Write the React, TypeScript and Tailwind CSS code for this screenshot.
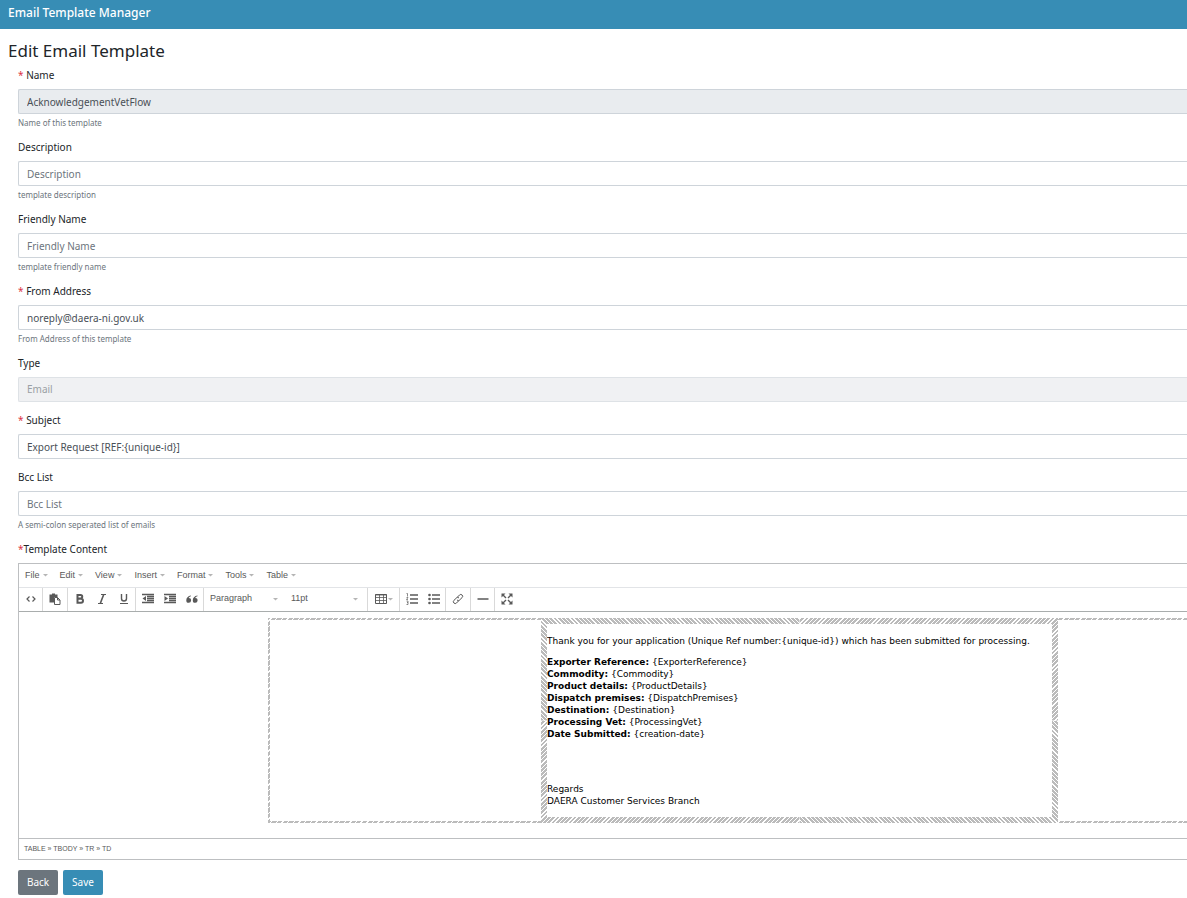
import type { ReactNode } from 'react'
import clsx from 'clsx'

interface FieldProps {
  id: string
  label: string
  required?: boolean
  value?: string
  placeholder?: string
  help?: string
  readOnly?: boolean
}

const labelClass = 'block text-[10px] leading-4 text-[#212529]'

function Field({ id, label, required, value, placeholder, help, readOnly }: FieldProps) {
  return (
    <div className={clsx(help ? 'h-[72px]' : 'h-[57px]')}>
      <label htmlFor={id} className={labelClass}>
        {required && <span className="text-[#dc3545]">* </span>}
        {label}
      </label>
      <input
        id={id}
        type="text"
        defaultValue={value}
        placeholder={placeholder}
        readOnly={readOnly}
        className={clsx(
          'mt-1.5 block h-[25px] w-full rounded-l-xs border border-r-0 border-[#ced4da] px-2 text-[10px] text-[#495057] outline-none placeholder:text-[#6c757d]',
          readOnly ? 'bg-[#e9ecef]' : 'bg-white'
        )}
      />
      {help && <small className="mt-[3px] block text-[8px] leading-3 text-[#6c757d]">{help}</small>}
    </div>
  )
}

function Caret() {
  return (
    <svg width="5" height="3" viewBox="0 0 5 3" className="shrink-0" aria-hidden="true">
      <path d="M0 0h5L2.5 2.5z" fill="#b5b5b5" />
    </svg>
  )
}

const menus = ['File', 'Edit', 'View', 'Insert', 'Format', 'Tools', 'Table']

function Icon({ children }: { children: ReactNode }) {
  return (
    <svg
      width="12"
      height="12"
      viewBox="0 0 12 12"
      fill="none"
      stroke="#595959"
      className="shrink-0"
      aria-hidden="true"
    >
      {children}
    </svg>
  )
}

function ToolButton({ label, children }: { label: string; children: ReactNode }) {
  return (
    <button type="button" aria-label={label} className="flex h-[22px] w-[22px] items-center justify-center">
      {children}
    </button>
  )
}

function ToolGroup({ children }: { children: ReactNode }) {
  return <div className="flex items-start border-r border-[#d9d9d9] px-px last:border-r-0">{children}</div>
}

function Toolbar() {
  return (
    <div className="flex h-6 border-b border-[#a9adad]">
      <div className="flex items-start border-r border-[#d9d9d9] pl-px">
        <ToolButton label="Source code">
          <Icon>
            <path d="M4.500 3.500 2 6l2.500 2.500M7.500 3.500 10 6 7.500 8.500" strokeWidth="1.200" />
          </Icon>
        </ToolButton>
      </div>
      <ToolGroup>
        <ToolButton label="Paste as text">
          <Icon>
            <path d="M.5 1.500h2.500V.5h3v1h2.500V4H5v5.500H.5z" fill="#595959" stroke="none" />
            <path d="M5.500 4.500h3l2.500 2.500v4.500h-5.500z" fill="#fff" />
            <path d="M8.500 4.500V7H11" />
          </Icon>
        </ToolButton>
      </ToolGroup>
      <div className="flex items-start border-r border-[#d9d9d9] pl-px">
        <ToolButton label="Bold">
          <Icon>
            <path d="M3.500 2h3a1.700 1.700 0 0 1 0 3.500h-3zM3.500 5.700H7a2 2 0 0 1 0 4H3.500z" strokeWidth="2" />
          </Icon>
        </ToolButton>
        <ToolButton label="Italic">
          <Icon>
            <path d="M5 1.500h5M2 10.500h5" />
            <path d="M7.700 1.500 4.300 10.500" strokeWidth="1.600" />
          </Icon>
        </ToolButton>
        <ToolButton label="Underline">
          <Icon>
            <path d="M3.500 1v4.500a2.500 2.500 0 0 0 5 0V1" strokeWidth="1.400" />
            <path d="M2 10.500h8" />
          </Icon>
        </ToolButton>
      </div>
      <div className="flex items-start border-r border-[#d9d9d9] pl-px">
        <ToolButton label="Decrease indent">
          <Icon>
            <path d="M0 1.500h12M5 3.500h7M5 5.500h7M5 7.500h7M0 9.500h12" strokeWidth="1.400" />
            <path d="M4 3v5L.5 5.500z" fill="#595959" stroke="none" />
          </Icon>
        </ToolButton>
        <ToolButton label="Increase indent">
          <Icon>
            <path d="M0 1.500h12M5 3.500h7M5 5.500h7M5 7.500h7M0 9.500h12" strokeWidth="1.400" />
            <path d="M.5 3v5L4 5.500z" fill="#595959" stroke="none" />
          </Icon>
        </ToolButton>
        <ToolButton label="Blockquote">
          <Icon>
            <g fill="#595959" stroke="none">
              <path d="M5 2.500C2 3 .3 4.800.3 7.200A2.400 2.400 0 1 0 2.700 5c.2-.8 1-1.500 2.300-1.800z" />
              <path d="M11.500 2.500c-3 .5-4.700 2.300-4.700 4.700A2.400 2.400 0 1 0 9.200 5c.2-.8 1-1.500 2.300-1.800z" />
            </g>
          </Icon>
        </ToolButton>
      </div>
      <ToolGroup>
        <button type="button" className="flex h-[22px] w-[81px] items-center justify-between pr-2 pl-[5px]">
          Paragraph
          <Caret />
        </button>
        <button type="button" className="flex h-[22px] w-20 items-center justify-between pr-2 pl-[5px]">
          11pt
          <Caret />
        </button>
      </ToolGroup>
      <div className="flex items-start border-r border-[#d9d9d9] pl-px">
        <button
          type="button"
          aria-label="Table"
          className="flex h-[22px] w-[30px] items-center justify-center gap-px"
        >
          <Icon>
            <path d="M.5 1.500h11v9H.5z" />
            <path d="M0 2h12M.5 4.500h11M.5 7.500h11M4.500 2v9M8.500 2v9" strokeWidth=".8" />
          </Icon>
          <Caret />
        </button>
      </div>
      <div className="flex items-start border-r border-[#d9d9d9] pl-px">
        <ToolButton label="Numbered list">
          <Icon>
            <path d="M4 2h8M4 6h8M4 10h8" strokeWidth="1.300" />
            <path d="M.5 .5h1v3M.5 4.500H2L.5 6.500H2M.5 8H2v3.500H.5M1 9.500h1" strokeWidth=".7" />
          </Icon>
        </ToolButton>
        <ToolButton label="Bullet list">
          <Icon>
            <path d="M4 2h8M4 6h8M4 10h8" strokeWidth="1.300" />
            <g fill="#595959" stroke="none">
              <circle cx="1.500" cy="2" r="1.300" />
              <circle cx="1.500" cy="6" r="1.300" />
              <circle cx="1.500" cy="10" r="1.300" />
            </g>
          </Icon>
        </ToolButton>
      </div>
      <ToolGroup>
        <ToolButton label="Insert link">
          <Icon>
            <path d="M5 4.500 7.500 2a1.800 1.800 0 0 1 2.600 2.600L7.600 7a1.800 1.800 0 0 1-2.600 0M7 7.500 4.500 10a1.800 1.800 0 0 1-2.600-2.600L4.400 5A1.800 1.800 0 0 1 7 5" />
          </Icon>
        </ToolButton>
      </ToolGroup>
      <div className="flex items-start border-r border-[#d9d9d9] pl-px">
        <ToolButton label="Horizontal line">
          <Icon>
            <path d="M.5 6h11" strokeWidth="1.500" />
          </Icon>
        </ToolButton>
      </div>
      <ToolGroup>
        <ToolButton label="Fullscreen">
          <Icon>
            <path d="M1.500 1.500 5 5M10.500 1.500 7 5M1.500 10.500 5 7M10.500 10.500 7 7" strokeWidth="1.400" />
            <path
              d="M.5.5h4l-4 4zM11.500.5v4l-4-4zM.5 11.500v-4l4 4zM11.500 11.500h-4l4-4z"
              fill="#595959"
              stroke="none"
            />
          </Icon>
        </ToolButton>
      </ToolGroup>
    </div>
  )
}

const details = [
  ['Exporter Reference', '{ExporterReference}'],
  ['Commodity', '{Commodity}'],
  ['Product details', '{ProductDetails}'],
  ['Dispatch premises', '{DispatchPremises}'],
  ['Destination', '{Destination}'],
  ['Processing Vet', '{ProcessingVet}'],
  ['Date Submitted', '{creation-date}'],
]

// The hatching mirrors in each quarter of the selected cell
const hatchClass =
  'bg-[image:repeating-linear-gradient(45deg,#bbb_0_2px,#fff_2px_3px),repeating-linear-gradient(-45deg,#bbb_0_2px,#fff_2px_3px),repeating-linear-gradient(-45deg,#bbb_0_2px,#fff_2px_3px),repeating-linear-gradient(45deg,#bbb_0_2px,#fff_2px_3px)] bg-[position:left_top,right_top,left_bottom,right_bottom] bg-[size:50%_50%] bg-no-repeat'

const dashClass = 'bg-[repeating-linear-gradient(-45deg,#bbb_0_3px,#fff_3px_4px)]'

function TemplateBody() {
  return (
    <div className="flex pt-1.5 pb-[15px] pl-[249px] font-['DejaVu_Sans',sans-serif] text-[9px] leading-3 text-black">
      <div className={clsx('flex w-[273px] shrink-0 py-0.5 pl-0.5', dashClass)}>
        <div className="flex-1 bg-white" />
      </div>
      <div className={clsx('w-[517px] shrink-0 p-1.5', hatchClass)}>
        <div className="h-[193px] bg-white pt-[11px]">
          <p className="whitespace-nowrap">
            Thank you for your application (Unique Ref number:{'{unique-id}'}) which has been submitted for
            processing.
          </p>
          <p className="mt-[9px]">
            {details.map(([name, value]) => (
              <span key={name} className="block">
                <strong>{name}:</strong> {value}
              </span>
            ))}
          </p>
          <p className="mt-[43px]">
            Regards
            <br />
            DAERA Customer Services Branch
          </p>
        </div>
      </div>
      <div className={clsx('flex flex-1 py-0.5', dashClass)}>
        <div className="flex-1 bg-white" />
      </div>
    </div>
  )
}

export default function App() {
  return (
    <div className="overflow-x-hidden bg-white font-['Noto_Sans','Open_Sans',sans-serif]">
      <header className="flex h-[29px] items-center bg-[#378db5] px-2 pb-1 text-[12px] font-medium text-white">
        Email Template Manager
      </header>
      <main className="pt-2.5">
        <h1 className="pl-2 text-[17px] leading-6 text-[#212529]">Edit Email Template</h1>
        <form className="mt-1 pl-[18px]">
          <Field id="name" label="Name" required value="AcknowledgementVetFlow" help="Name of this template" readOnly />
          <Field id="description" label="Description" placeholder="Description" help="template description" />
          <Field id="friendly" label="Friendly Name" placeholder="Friendly Name" help="template friendly name" />
          <Field
            id="from"
            label="From Address"
            required
            value="noreply@daera-ni.gov.uk"
            help="From Address of this template"
          />
          <div className="h-[57px]">
            <label htmlFor="type" className={labelClass}>
              Type
            </label>
            <select
              id="type"
              disabled
              className="mt-1.5 block h-[25px] w-full appearance-none rounded-l-xs border border-r-0 border-[#dee2e6] bg-[#f0f1f3] px-2 text-[10px] text-[#9a9fa4]"
            >
              <option>Email</option>
            </select>
          </div>
          <Field id="subject" label="Subject" required value="Export Request [REF:{unique-id}]" />
          <Field id="bcc" label="Bcc List" placeholder="Bcc List" help="A semi-colon seperated list of emails" />
          <p className={labelClass}>
            <span className="text-[#dc3545]">*</span>Template Content
          </p>
          <div className="mt-1.5 border border-r-0 border-[#bdbfc1] font-['Liberation_Sans',Arial,sans-serif] text-[9px] text-[#595959]">
            <div className="flex h-6 items-center border-b border-[#e2e4e7]">
              {menus.map((menu) => (
                <button key={menu} type="button" className="flex items-center gap-[3px] px-1.5">
                  {menu}
                  <Caret />
                </button>
              ))}
            </div>
            <Toolbar />
            <TemplateBody />
            <div className="h-[21px] border-t border-[#bdbfc1] px-[5px] pt-1 text-[7px] leading-3">
              TABLE » TBODY » TR » TD
            </div>
          </div>
          <div className="mt-2.5 flex gap-[5px] text-[10px] text-white">
            <button type="button" className="h-[25px] w-10 rounded-xs bg-[#6c757d]">
              Back
            </button>
            <button type="submit" className="h-[25px] w-10 rounded-xs bg-[#378db5]">
              Save
            </button>
          </div>
        </form>
      </main>
    </div>
  )
}
